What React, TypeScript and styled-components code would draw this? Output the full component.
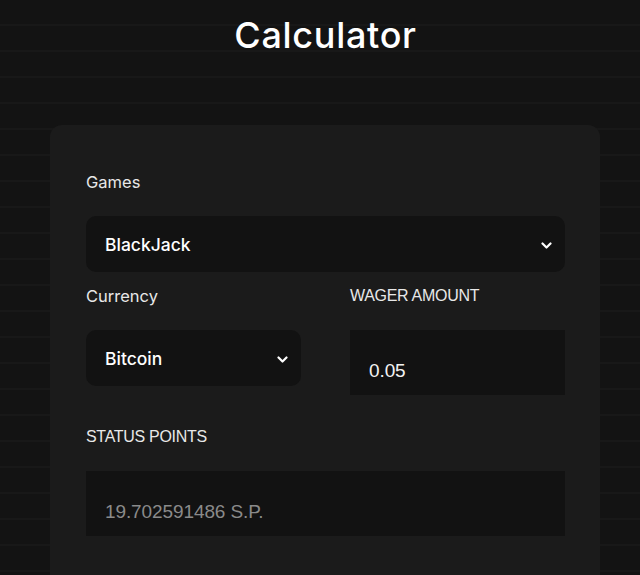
import React from 'react';
import styled, { createGlobalStyle } from 'styled-components';

const GlobalStyle = createGlobalStyle`
  html, body {
    margin: 0;
    padding: 0;
    background-color: #131313;
  }
  body {
    font-family: Inter, "Noto Sans", sans-serif;
    color: #fff;
  }
`;

const Page = styled.div`
  min-height: 575px;
  background-color: #131313;
  background-image: repeating-linear-gradient(
    to bottom,
    #131313 0px,
    #131313 24px,
    #181818 24px,
    #181818 26px
  );
  padding-top: 13px;
  overflow: hidden;
`;

const Title = styled.h1`
  margin: 0;
  padding-left: 11px;
  text-align: center;
  font-size: 36px;
  line-height: 44px;
  font-weight: 550;
  letter-spacing: 0.7px;
`;

const Card = styled.div`
  margin: 68px 40px 0 50px;
  background: #1b1b1b;
  border-radius: 12px;
  padding: 47px 35px 60px 36px;
`;

const Field = styled.div`
  display: flex;
  flex-direction: column;
`;

const Label = styled.label<{ $caps?: boolean }>`
  font-family: ${p => (p.$caps ? '"Liberation Sans", Arial, sans-serif' : 'Inter, "Noto Sans", sans-serif')};
  font-size: ${p => (p.$caps ? '16px' : '16.5px')};
  line-height: 20px;
  color: #e8e8e8;
  margin-bottom: 24px;
  letter-spacing: ${p => (p.$caps ? '-0.3px' : '0')};
`;

const Select = styled.div`
  height: 56px;
  background: #121212;
  border-radius: 10px;
  display: flex;
  align-items: center;
  justify-content: space-between;
  padding: 0 13px 0 19px;
  font-size: 17.5px;
  color: #fff;
  font-weight: 500;
`;

const Input = styled.div<{ $muted?: boolean }>`
  height: 65px;
  background: #121212;
  display: flex;
  align-items: center;
  padding: 17px 18px 0 19px;
  box-sizing: border-box;
  font-family: "Liberation Sans", Arial, sans-serif;
  font-size: 19px;
  color: ${p => (p.$muted ? '#8a8a8a' : '#f2f2f2')};
  letter-spacing: -0.1px;
`;

const Row = styled.div`
  display: grid;
  grid-template-columns: 215px 215px;
  column-gap: 49px;
  align-items: start;
  margin-top: 14px;
`;

const StatusField = styled(Field)`
  margin-top: 32px;
`;

const Chevron = () => (
  <svg width="11" height="8" viewBox="0 0 11 8" style={{ marginTop: 3 }}>
    <polyline points="1.5,1.5 5.5,5.5 9.5,1.5" fill="none" stroke="#fff" strokeWidth="2.2" strokeLinecap="round" strokeLinejoin="round" />
  </svg>
);

export default function App() {
  return (
    <>
      <GlobalStyle />
      <Page>
        <Title>Calculator</Title>
        <Card>
          <Field>
            <Label>Games</Label>
            <Select>
              <span>BlackJack</span>
              <Chevron />
            </Select>
          </Field>
          <Row>
            <Field>
              <Label>Currency</Label>
              <Select>
                <span>Bitcoin</span>
                <Chevron />
              </Select>
            </Field>
            <Field>
              <Label $caps>WAGER AMOUNT</Label>
              <Input>0.05</Input>
            </Field>
          </Row>
          <StatusField>
            <Label $caps>STATUS POINTS</Label>
            <Input $muted>19.702591486 S.P.</Input>
          </StatusField>
        </Card>
      </Page>
    </>
  );
}
